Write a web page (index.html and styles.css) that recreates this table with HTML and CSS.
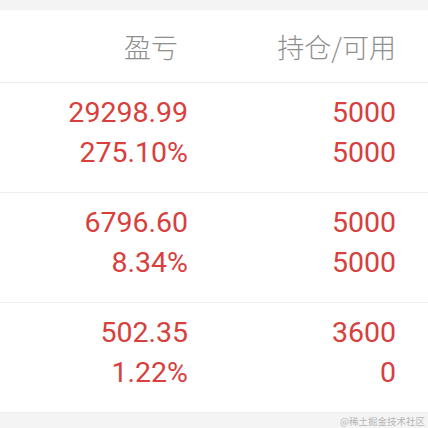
FILE: index.html
```html
<!DOCTYPE html>
<html>
<head>
<meta charset="utf-8">
<link rel="stylesheet" href="styles.css">
</head>
<body>
<div class="page">
  <div class="table">
    <div class="head">
      <div class="cell first">盈亏</div>
      <div class="cell">持仓/可用</div>
    </div>
    <div class="row">
      <div class="cell"><div>29298.99</div><div>275.10%</div></div>
      <div class="cell"><div>5000</div><div>5000</div></div>
    </div>
    <div class="row">
      <div class="cell"><div>6796.60</div><div>8.34%</div></div>
      <div class="cell"><div>5000</div><div>5000</div></div>
    </div>
    <div class="row">
      <div class="cell"><div>502.35</div><div>1.22%</div></div>
      <div class="cell"><div>3600</div><div>0</div></div>
    </div>
  </div>
  <div class="foot">@稀土掘金技术社区</div>
</div>
</body>
</html>
```
FILE: styles.css
```css
html, body {
  margin: 0;
  padding: 0;
  background: #f4f4f4;
}
.page {
  width: 428px;
  height: 428px;
  padding-top: 10px;
  box-sizing: border-box;
  display: flex;
  flex-direction: column;
}
.table {
  background: #fff;
}
.head, .row {
  display: grid;
  grid-template-columns: 1fr 208px;
  padding-right: 32px;
  border-bottom: 1px solid #eeeeee;
}
.head {
  height: 72px;
  align-items: center;
  font-family: "Noto Sans CJK SC", sans-serif;
  font-size: 27px;
  font-weight: 300;
  color: #8f8f8f;
  line-height: 1;
}
.cell {
  text-align: right;
}
.head .first {
  padding-right: 10px;
}
.row {
  padding-top: 10px;
  height: 99px;
  font-family: Roboto, sans-serif;
  font-size: 28.5px;
  line-height: 40px;
  color: #d8403d;
}
.foot {
  flex: 1;
  text-align: right;
  padding-right: 3px;
  padding-top: 2px;
  font-family: "Noto Sans CJK SC", serif;
  font-size: 9.5px;
  line-height: 12px;
  color: #b4b4b4;
}
```
